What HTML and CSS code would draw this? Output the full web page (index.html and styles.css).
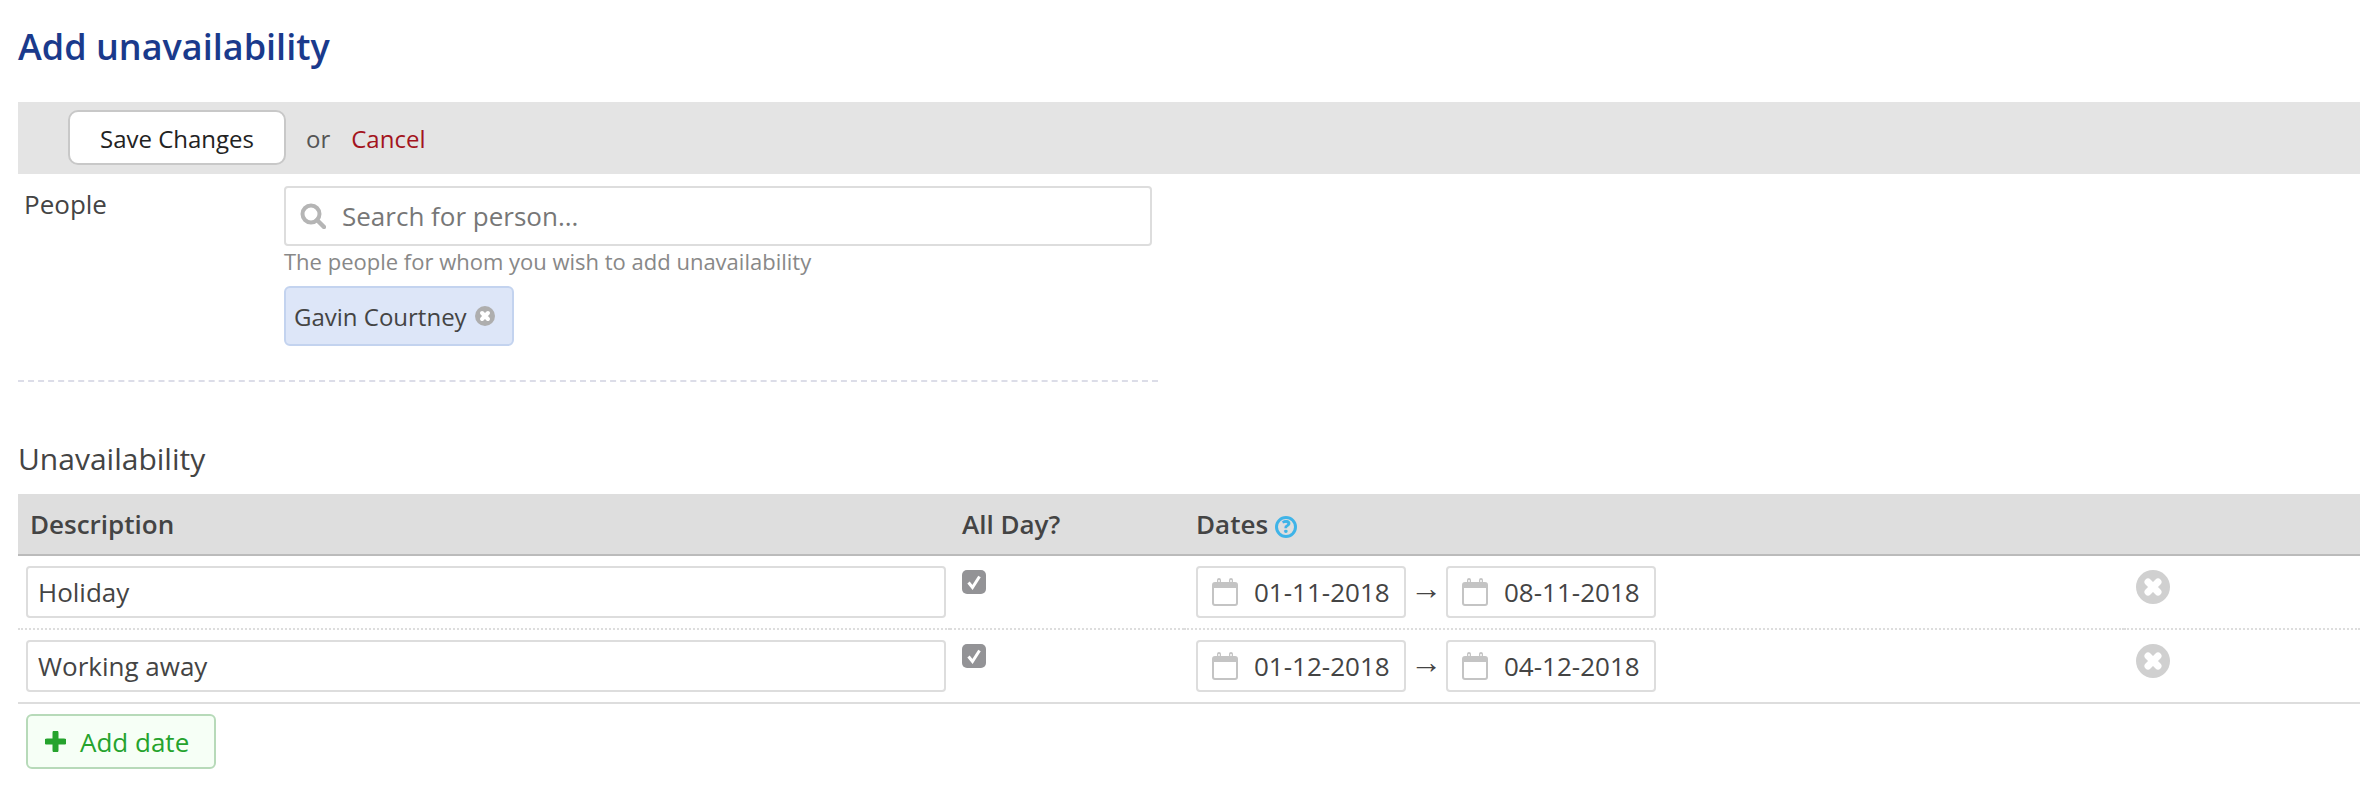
FILE: index.html
```html
<!DOCTYPE html>
<html lang="en">
<head>
<meta charset="utf-8">
<title>Add unavailability</title>
<link rel="stylesheet" href="styles.css">
</head>
<body>
<h1 class="title">Add unavailability</h1>
<div class="action-bar">
  <button class="save-btn" type="button">Save Changes</button>
  <span class="or">or</span>
  <a class="cancel" href="#">Cancel</a>
</div>
<section class="people-section">
  <label class="field-label">People</label>
  <div class="field-body">
    <div class="search-box">
      <svg class="search-icon" viewBox="0 0 26 26"><circle cx="11" cy="11" r="8.5" fill="none" stroke="#b5b5b5" stroke-width="4"/><path d="M17 17l7 7" stroke="#b5b5b5" stroke-width="4.4" stroke-linecap="round"/></svg>
      <input class="search-input" type="text" placeholder="Search for person...">
    </div>
    <p class="helper">The people for whom you wish to add unavailability</p>
    <div class="chip">
      <span>Gavin Courtney</span>
      <svg class="chip-x" viewBox="0 0 34 34"><circle cx="17" cy="17" r="17" fill="#aeaeae"/><path d="M12 12l10 10M22 12L12 22" stroke="#fff" stroke-width="7" stroke-linecap="round"/></svg>
    </div>
  </div>
</section>
<h2 class="subtitle">Unavailability</h2>
<table class="dates-table">
  <colgroup>
    <col class="col-desc"><col class="col-day"><col class="col-dates"><col class="col-del">
  </colgroup>
  <thead>
    <tr>
      <th class="th-desc">Description</th>
      <th>All Day?</th>
      <th class="th-dates">Dates <svg class="help" viewBox="0 0 22 22"><circle cx="11" cy="11" r="9.5" fill="none" stroke="#3fb4e8" stroke-width="3"/><text x="11" y="17" text-anchor="middle" class="help-q">?</text></svg></th>
      <th></th>
    </tr>
  </thead>
  <tbody>
    <tr class="row-first">
      <td class="td-desc"><input class="text-input" type="text" value="Holiday"></td>
      <td><span class="check"><svg viewBox="0 0 24 24"><path d="M6.5 12.5l4 5 7-11" fill="none" stroke="#fff" stroke-width="3"/></svg></span></td>
      <td class="td-dates">
        <div class="date-range">
          <div class="date-box"><svg class="cal" viewBox="0 0 26 28"><rect x="1" y="5" width="24" height="22" rx="2" fill="#fff" stroke="#c4c4c4" stroke-width="2"/><path d="M2 5h22v5H2z" fill="#c4c4c4"/><path d="M7 2v5M19 2v5" stroke="#c4c4c4" stroke-width="4" stroke-linecap="round"/><path d="M7 2v2M19 2v2" stroke="#fff" stroke-width="1.4"/></svg><span>01-11-2018</span></div>
          <span class="arrow">→</span>
          <div class="date-box"><svg class="cal" viewBox="0 0 26 28"><rect x="1" y="5" width="24" height="22" rx="2" fill="#fff" stroke="#c4c4c4" stroke-width="2"/><path d="M2 5h22v5H2z" fill="#c4c4c4"/><path d="M7 2v5M19 2v5" stroke="#c4c4c4" stroke-width="4" stroke-linecap="round"/><path d="M7 2v2M19 2v2" stroke="#fff" stroke-width="1.4"/></svg><span>08-11-2018</span></div>
        </div>
      </td>
      <td class="td-del"><svg class="del" viewBox="0 0 34 34"><circle cx="17" cy="17" r="17" fill="#d0d0d0"/><path d="M12 12l10 10M22 12L12 22" stroke="#fff" stroke-width="7" stroke-linecap="round"/></svg></td>
    </tr>
    <tr>
      <td class="td-desc"><input class="text-input" type="text" value="Working away"></td>
      <td><span class="check"><svg viewBox="0 0 24 24"><path d="M6.5 12.5l4 5 7-11" fill="none" stroke="#fff" stroke-width="3"/></svg></span></td>
      <td class="td-dates">
        <div class="date-range">
          <div class="date-box"><svg class="cal" viewBox="0 0 26 28"><rect x="1" y="5" width="24" height="22" rx="2" fill="#fff" stroke="#c4c4c4" stroke-width="2"/><path d="M2 5h22v5H2z" fill="#c4c4c4"/><path d="M7 2v5M19 2v5" stroke="#c4c4c4" stroke-width="4" stroke-linecap="round"/><path d="M7 2v2M19 2v2" stroke="#fff" stroke-width="1.4"/></svg><span>01-12-2018</span></div>
          <span class="arrow">→</span>
          <div class="date-box"><svg class="cal" viewBox="0 0 26 28"><rect x="1" y="5" width="24" height="22" rx="2" fill="#fff" stroke="#c4c4c4" stroke-width="2"/><path d="M2 5h22v5H2z" fill="#c4c4c4"/><path d="M7 2v5M19 2v5" stroke="#c4c4c4" stroke-width="4" stroke-linecap="round"/><path d="M7 2v2M19 2v2" stroke="#fff" stroke-width="1.4"/></svg><span>04-12-2018</span></div>
        </div>
      </td>
      <td class="td-del"><svg class="del" viewBox="0 0 34 34"><circle cx="17" cy="17" r="17" fill="#d0d0d0"/><path d="M12 12l10 10M22 12L12 22" stroke="#fff" stroke-width="7" stroke-linecap="round"/></svg></td>
    </tr>
  </tbody>
</table>
<button class="add-btn" type="button">
  <svg class="plus" viewBox="0 0 21 21"><path d="M10.5 2v17M2 10.5h17" stroke="#25a32d" stroke-width="6" stroke-linecap="round"/></svg>
  <span>Add date</span>
</button>
</body>
</html>
```

FILE: styles.css
```css
* { box-sizing: border-box; }
html, body { background: #fff; }
body {
  margin: 0;
  padding: 0 8px 0 18px;
  font-family: "Open Sans", sans-serif;
  font-size: 26px;
  color: #444;
  overflow: hidden;
}
.title {
  margin: 0;
  height: 102px;
  padding-top: 22px;
  font-size: 36px;
  line-height: 50px;
  font-weight: 600;
  color: #1a3a8c;
}
.action-bar {
  display: flex;
  align-items: flex-start;
  height: 72px;
  padding: 8px 0 0 50px;
  background: #e4e4e4;
}
.save-btn {
  width: 218px;
  height: 55px;
  padding: 2px 0 0;
  background: #fff;
  border: 2px solid #c8c8c8;
  border-radius: 10px;
  font: 400 24px/32px "Open Sans", sans-serif;
  color: #222;
}
.or { margin: 12px 0 0 20px; font-size: 24px; line-height: 34px; color: #555; }
.cancel { margin: 12px 0 0 21px; font-size: 24px; line-height: 34px; color: #a31420; text-decoration: none; }
.people-section {
  display: flex;
  width: 1140px;
  height: 208px;
  padding: 12px 0 0 6px;
  border-bottom: 2px dashed #dcdde8;
}
.field-label { width: 260px; font-size: 26px; line-height: 36px; color: #444; }
.field-body { width: 868px; }
.search-box {
  display: flex;
  align-items: center;
  height: 60px;
  padding-left: 14px;
  border: 2px solid #ddd;
  border-radius: 4px;
}
.search-icon { flex: none; width: 26px; height: 26px; }
.search-input {
  flex: 1;
  min-width: 0;
  margin-left: 16px;
  padding: 0;
  border: 0;
  outline: 0;
  font: 400 26px/36px "Open Sans", sans-serif;
  color: #777;
}
.search-input::placeholder { color: #777; opacity: 1; }
.helper { margin: 0; height: 40px; font-size: 22px; line-height: 30px; color: #888; }
.chip {
  display: inline-flex;
  align-items: center;
  height: 60px;
  padding: 0 17px 0 8px;
  background: #dde6f8;
  border: 2px solid #c3d3ef;
  border-radius: 6px;
  font-size: 24px;
  color: #444;
}
.chip-x { width: 20px; height: 20px; margin-left: 8px; }
.subtitle {
  margin: 0;
  height: 112px;
  padding-top: 55px;
  font-size: 30px;
  line-height: 44px;
  font-weight: 400;
  color: #444;
}
.dates-table {
  width: 2342px;
  table-layout: fixed;
  border-collapse: separate;
  border-spacing: 0;
  border-bottom: 2px solid #ddd;
}
.col-desc { width: 932px; }
.col-day { width: 234px; }
.col-dates { width: 940px; }
.col-del { width: 236px; }
.dates-table th {
  height: 62px;
  padding: 0 0 0 12px;
  text-align: left;
  font-size: 26px;
  font-weight: 600;
  background: #dedede;
  border-bottom: 2px solid #bbb;
  color: #444;
}
.dates-table td { height: 72px; padding: 10px 0 10px 12px; vertical-align: top; }
.row-first td { border-bottom: 2px dotted #ddd; }
.dates-table .row-first td { height: 74px; }
.dates-table td.td-desc { padding-left: 8px; }
.text-input {
  display: block;
  width: 920px;
  height: 52px;
  padding: 0 10px;
  border: 2px solid #ddd;
  border-radius: 4px;
  outline: 0;
  font: 400 26px/36px "Open Sans", sans-serif;
  color: #444;
}
.check {
  display: block;
  width: 24px;
  height: 24px;
  margin-top: 4px;
  background: #939396;
  border-radius: 5px;
}
.check svg { display: block; }
.date-range { display: flex; align-items: center; }
.date-box {
  display: flex;
  align-items: center;
  width: 210px;
  height: 52px;
  padding-left: 14px;
  border: 2px solid #ddd;
  border-radius: 4px;
  color: #444;
}
.cal { flex: none; width: 26px; height: 28px; margin-right: 16px; }
.arrow { width: 40px; text-align: center; font-family: "Liberation Sans", sans-serif; font-size: 32px; line-height: 36px; margin-top: -8px; color: #444; }
.dates-table td.td-del { padding-top: 14px; }
.del { display: block; width: 34px; height: 34px; }
.help { width: 22px; height: 22px; vertical-align: -4px; margin-left: 0; }
.help-q { font: 800 17px "Open Sans", sans-serif; fill: #3fb4e8; }
.add-btn {
  display: flex;
  align-items: center;
  width: 190px;
  height: 55px;
  margin: 10px 0 0 8px;
  padding: 0 0 0 17px;
  background: #f6fff6;
  border: 2px solid #b7dab9;
  border-radius: 6px;
  font: 400 26px/36px "Open Sans", sans-serif;
  color: #25a32d;
}
.plus { width: 21px; height: 21px; margin-right: 14px; }
```
